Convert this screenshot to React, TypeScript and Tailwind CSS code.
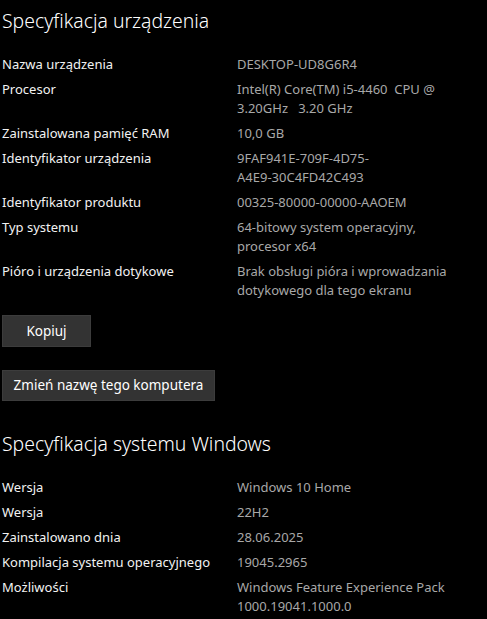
import React from "react";

type Row = { label: string; value: string[] };

const device: Row[] = [
  { label: "Nazwa urządzenia", value: ["DESKTOP-UD8G6R4"] },
  { label: "Procesor", value: ["Intel(R) Core(TM) i5-4460  CPU @", "3.20GHz   3.20 GHz"] },
  { label: "Zainstalowana pamięć RAM", value: ["10,0 GB"] },
  { label: "Identyfikator urządzenia", value: ["9FAF941E-709F-4D75-", "A4E9-30C4FD42C493"] },
  { label: "Identyfikator produktu", value: ["00325-80000-00000-AAOEM"] },
  { label: "Typ systemu", value: ["64-bitowy system operacyjny,", "procesor x64"] },
  { label: "Pióro i urządzenia dotykowe", value: ["Brak obsługi pióra i wprowadzania", "dotykowego dla tego ekranu"] },
];

const windows: Row[] = [
  { label: "Wersja", value: ["Windows 10 Home"] },
  { label: "Wersja", value: ["22H2"] },
  { label: "Zainstalowano dnia", value: ["28.06.2025"] },
  { label: "Kompilacja systemu operacyjnego", value: ["19045.2965"] },
  { label: "Możliwości", value: ["Windows Feature Experience Pack", "1000.19041.1000.0"] },
];

function Table({ rows }: { rows: Row[] }) {
  return (
    <div className="grid grid-cols-[235px_1fr] gap-y-[6px] text-[13px] leading-[19px]">
      {rows.map((r, i) => (
        <React.Fragment key={i}>
          <div className="text-[#f2f2f2]">{r.label}</div>
          <div className="text-[#a8a8a8] whitespace-pre">
            {r.value.map((v, j) => (
              <div key={j}>{v}</div>
            ))}
          </div>
        </React.Fragment>
      ))}
    </div>
  );
}

export default function App() {
  return (
    <div
      className="w-[487px] h-[619px] bg-black overflow-hidden pl-[2px] pt-[7px] text-white"
      style={{ fontFamily: '"Noto Sans", "Open Sans", sans-serif' }}
    >
      <h1 className="text-[19.4px] leading-[28px] font-light text-white">Specyfikacja urządzenia</h1>
      <div className="mt-[20px]">
        <Table rows={device} />
      </div>
      <div className="mt-[15px] flex flex-col items-start gap-[23px]">
        <button className="w-[89px] h-[32px] bg-[#333333] border border-[#3c3c3c] text-[13.5px] text-white">
          Kopiuj
        </button>
        <button className="w-[213px] h-[31px] bg-[#333333] border border-[#3c3c3c] text-[13.5px] text-white">
          Zmień nazwę tego komputera
        </button>
      </div>
      <h2 className="mt-[29px] text-[19.4px] leading-[28px] font-light text-white">
        Specyfikacja systemu Windows
      </h2>
      <div className="mt-[20px]">
        <Table rows={windows} />
      </div>
    </div>
  );
}
